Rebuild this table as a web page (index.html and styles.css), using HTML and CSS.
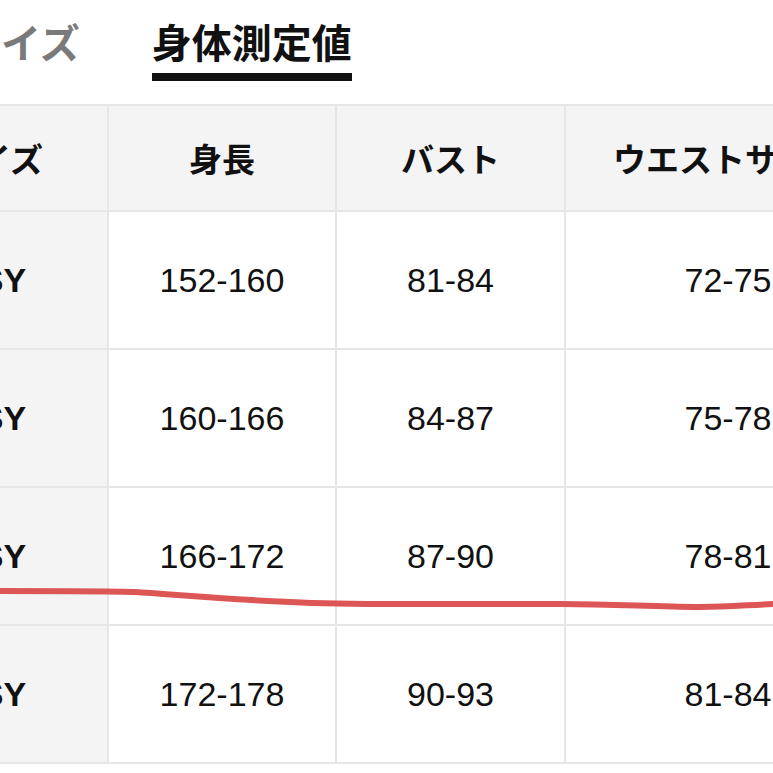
FILE: index.html
```html
<!DOCTYPE html>
<html lang="ja">
<head>
<meta charset="utf-8">
<title>身体測定値</title>
<link rel="stylesheet" href="styles.css">
</head>
<body>
<div class="page">
  <nav class="tabs">
    <span class="tab">サイズ</span>
    <span class="tab active">身体測定値</span>
  </nav>
  <table class="chart">
    <colgroup>
      <col class="c1"><col class="c2"><col class="c3"><col class="c4">
    </colgroup>
    <thead>
      <tr><th class="label">サイズ</th><th>身長</th><th>バスト</th><th>ウエストサイズ</th></tr>
    </thead>
    <tbody>
      <tr><th class="label size">1SY</th><td>152-160</td><td>81-84</td><td>72-75</td></tr>
      <tr><th class="label size">2SY</th><td>160-166</td><td>84-87</td><td>75-78</td></tr>
      <tr><th class="label size">3SY</th><td>166-172</td><td>87-90</td><td>78-81</td></tr>
      <tr><th class="label size">4SY</th><td>172-178</td><td>90-93</td><td>81-84</td></tr>
    </tbody>
  </table>
  <div class="bottom-rule"></div>
  <svg class="mark" width="773" height="773" viewBox="0 0 773 773" aria-hidden="true">
    <path d="M-5 591 C 60 591, 110 591, 135 592 C 170 594, 220 599, 290 602 C 330 604, 360 604, 400 604 L 560 604 C 620 604, 650 607, 700 607 C 735 607, 755 604, 780 604" fill="none" stroke="#dd5656" stroke-width="6" stroke-linecap="round"/>
  </svg>
</div>
</body>
</html>
```

FILE: styles.css
```css
html, body {
  margin: 0;
  padding: 0;
  background: #ffffff;
  overflow: hidden;
}

.page {
  position: relative;
  width: 773px;
  height: 773px;
  overflow: hidden;
  font-family: "Noto Sans CJK JP", "Liberation Sans", sans-serif;
  color: #111111;
}

.tabs {
  display: flex;
  gap: 72px;
  margin-left: -39px;
  padding-top: 13px;
  height: 92px;
  box-sizing: border-box;
}

.tab {
  font-size: 40px;
  font-weight: 700;
  line-height: 56px;
  color: #7a7a7a;
  height: 68px;
  box-sizing: border-box;
}

.tab.active {
  color: #111111;
  border-bottom: 8px solid #111111;
}

.chart {
  margin-top: 12px;
  margin-left: -121px;
  border-collapse: collapse;
  table-layout: fixed;
  width: 1011px;
}

.c1 { width: 228px; }
.c2 { width: 228px; }
.c3 { width: 229px; }
.c4 { width: 326px; }

.chart th,
.chart td {
  border: 2px solid #e6e6e6;
  text-align: center;
  vertical-align: middle;
  padding: 0;
}

.chart thead th {
  height: 104px;
  background: #f4f4f4;
  font-size: 33px;
  font-weight: 700;
}

.chart tbody td,
.chart tbody th {
  height: 136px;
  font-family: "Liberation Sans", Arial, sans-serif;
  font-size: 34px;
}

.chart tbody td {
  font-weight: 400;
  background: #ffffff;
}

.chart .label {
  background: #f4f4f4;
}

.chart .size {
  font-weight: 700;
}

.bottom-rule {
  margin-top: 10px;
  height: 2px;
  background: #8a8a8a;
}

.mark {
  position: absolute;
  left: 0;
  top: 0;
  pointer-events: none;
}
```
